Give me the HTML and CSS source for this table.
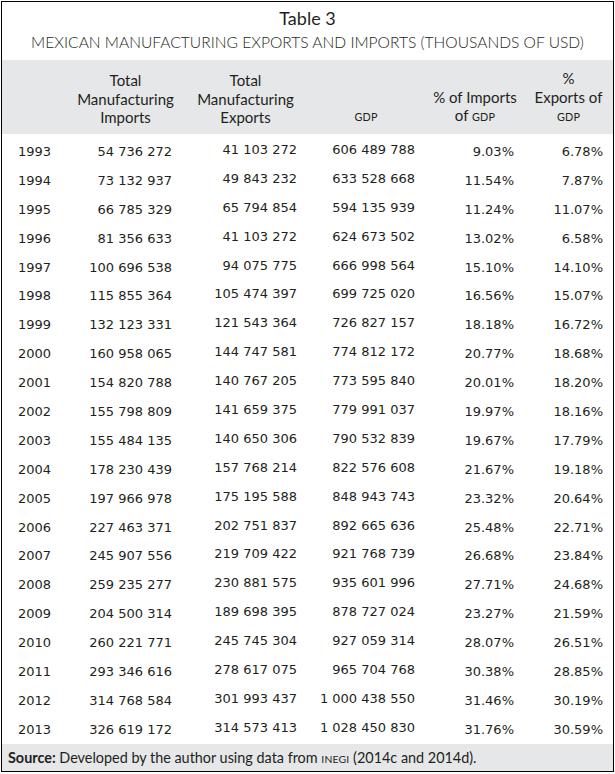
FILE: index.html
```html
<!DOCTYPE html>
<html lang="en">
<head>
<meta charset="utf-8">
<title>Table 3</title>
<link rel="stylesheet" href="styles.css">
</head>
<body>
<div class="sheet">
  <header class="caption">
    <div class="title">Table 3</div>
    <div class="subtitle">MEXICAN MANUFACTURING EXPORTS AND IMPORTS (THOUSANDS OF USD)</div>
  </header>
  <div class="head">
    <div></div>
    <div class="hc">Total<br>Manufacturing<br>Imports</div>
    <div class="hc">Total<br>Manufacturing<br>Exports</div>
    <div class="hc"><span class="sc">GDP</span></div>
    <div class="hc">% of Imports<br>of <span class="sc">GDP</span></div>
    <div class="hc">%<br>Exports of<br><span class="sc">GDP</span></div>
  </div>
  <div class="rows">
    <div class="row"><span class="yr">1993</span><span>54 736 272</span><span class="up">41 103 272</span><span class="up">606 489 788</span><span>9.03%</span><span>6.78%</span></div>
    <div class="row"><span class="yr">1994</span><span>73 132 937</span><span class="up">49 843 232</span><span class="up">633 528 668</span><span>11.54%</span><span>7.87%</span></div>
    <div class="row"><span class="yr">1995</span><span>66 785 329</span><span class="up">65 794 854</span><span class="up">594 135 939</span><span>11.24%</span><span>11.07%</span></div>
    <div class="row"><span class="yr">1996</span><span>81 356 633</span><span class="up">41 103 272</span><span class="up">624 673 502</span><span>13.02%</span><span>6.58%</span></div>
    <div class="row"><span class="yr">1997</span><span>100 696 538</span><span class="up">94 075 775</span><span class="up">666 998 564</span><span>15.10%</span><span>14.10%</span></div>
    <div class="row"><span class="yr">1998</span><span>115 855 364</span><span class="up">105 474 397</span><span class="up">699 725 020</span><span>16.56%</span><span>15.07%</span></div>
    <div class="row"><span class="yr">1999</span><span>132 123 331</span><span class="up">121 543 364</span><span class="up">726 827 157</span><span>18.18%</span><span>16.72%</span></div>
    <div class="row"><span class="yr">2000</span><span>160 958 065</span><span class="up">144 747 581</span><span class="up">774 812 172</span><span>20.77%</span><span>18.68%</span></div>
    <div class="row"><span class="yr">2001</span><span>154 820 788</span><span class="up">140 767 205</span><span class="up">773 595 840</span><span>20.01%</span><span>18.20%</span></div>
    <div class="row"><span class="yr">2002</span><span>155 798 809</span><span class="up">141 659 375</span><span class="up">779 991 037</span><span>19.97%</span><span>18.16%</span></div>
    <div class="row"><span class="yr">2003</span><span>155 484 135</span><span class="up">140 650 306</span><span class="up">790 532 839</span><span>19.67%</span><span>17.79%</span></div>
    <div class="row"><span class="yr">2004</span><span>178 230 439</span><span class="up">157 768 214</span><span class="up">822 576 608</span><span>21.67%</span><span>19.18%</span></div>
    <div class="row"><span class="yr">2005</span><span>197 966 978</span><span class="up">175 195 588</span><span class="up">848 943 743</span><span>23.32%</span><span>20.64%</span></div>
    <div class="row"><span class="yr">2006</span><span>227 463 371</span><span class="up">202 751 837</span><span class="up">892 665 636</span><span>25.48%</span><span>22.71%</span></div>
    <div class="row"><span class="yr">2007</span><span>245 907 556</span><span class="up">219 709 422</span><span class="up">921 768 739</span><span>26.68%</span><span>23.84%</span></div>
    <div class="row"><span class="yr">2008</span><span>259 235 277</span><span class="up">230 881 575</span><span class="up">935 601 996</span><span>27.71%</span><span>24.68%</span></div>
    <div class="row"><span class="yr">2009</span><span>204 500 314</span><span class="up">189 698 395</span><span class="up">878 727 024</span><span>23.27%</span><span>21.59%</span></div>
    <div class="row"><span class="yr">2010</span><span>260 221 771</span><span class="up">245 745 304</span><span class="up">927 059 314</span><span>28.07%</span><span>26.51%</span></div>
    <div class="row"><span class="yr">2011</span><span>293 346 616</span><span class="up">278 617 075</span><span class="up">965 704 768</span><span>30.38%</span><span>28.85%</span></div>
    <div class="row"><span class="yr">2012</span><span>314 768 584</span><span class="up">301 993 437</span><span class="up">1 000 438 550</span><span>31.46%</span><span>30.19%</span></div>
    <div class="row"><span class="yr">2013</span><span>326 619 172</span><span class="up">314 573 413</span><span class="up">1 028 450 830</span><span>31.76%</span><span>30.59%</span></div>
  </div>
  <footer class="source"><b>Source:</b> Developed by the author using data from <span class="sc">INEGI</span> (2014c and 2014d).</footer>
</div>
</body>
</html>
```

FILE: styles.css
```css
body {
  margin: 0;
  background: #ffffff;
}

.sheet {
  margin: 1px 0 0 1px;
  width: 613px;
  height: 771px;
  box-sizing: border-box;
  border: 1px solid #000000;
  display: flex;
  flex-direction: column;
  color: #231f20;
  font-family: Lato, "Liberation Sans", sans-serif;
}

.caption {
  height: 58px;
  box-sizing: border-box;
  padding-top: 5px;
  text-align: center;
}

.title {
  font-size: 18px;
  line-height: 22px;
}

.subtitle {
  margin-top: 3px;
  font-size: 15.6px;
  line-height: 20px;
  font-weight: 300;
}

.head {
  height: 74px;
  box-sizing: border-box;
  padding: 9px 0 9.5px;
  background: #e6e7e8;
  display: grid;
  grid-template-columns: 64px 119px 121px 120px 98px 89px;
  align-items: end;
  font-size: 15px;
  line-height: 18.5px;
  text-align: center;
  white-space: nowrap;
}

.sc {
  font-size: 0.72em;
  letter-spacing: 0.02em;
}

.rows {
  padding-top: 3px;
  font-family: "DejaVu Sans", sans-serif;
  font-size: 13px;
}

.row {
  height: 28.9px;
  display: grid;
  grid-template-columns: 62px 92px 125px 118px 99px 89px;
  padding: 0 10px 0 16px;
  align-items: center;
  text-align: right;
  white-space: nowrap;
}

.row .yr {
  text-align: left;
}

.row .up {
  padding-bottom: 4px;
}

.source {
  margin-top: auto;
  height: 27px;
  box-sizing: border-box;
  padding: 0 6px;
  background: #e6e7e8;
  font-size: 14.4px;
  line-height: 27px;
  white-space: nowrap;
}

.source b {
  font-weight: 700;
}
```
